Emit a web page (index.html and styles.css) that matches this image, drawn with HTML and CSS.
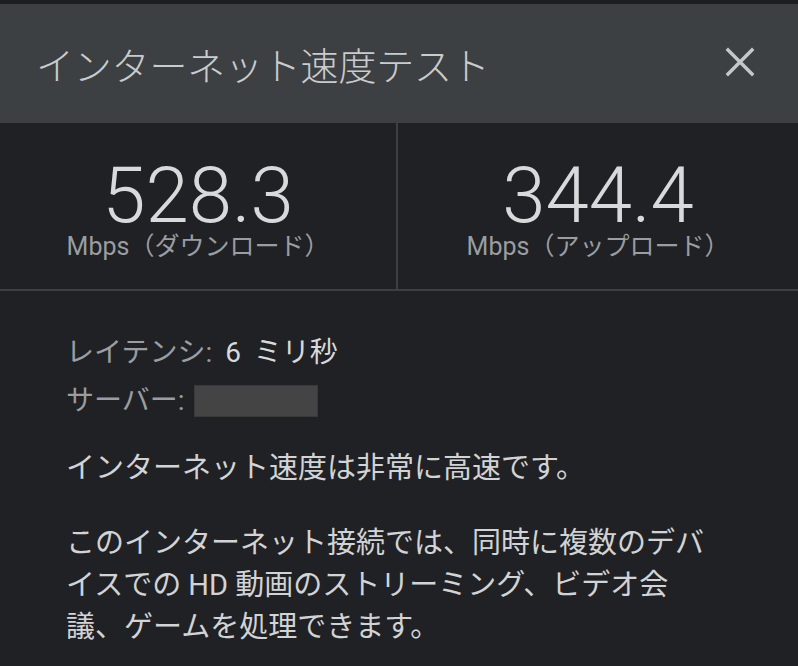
FILE: index.html
```html
<!DOCTYPE html>
<html lang="ja">
<head>
    <meta charset="UTF-8">
    <meta name="viewport" content="width=device-width, initial-scale=1.0">
    <title>インターネット速度テスト</title>
    <link rel="stylesheet" href="styles.css">
</head>
<body>
    <div id="speedTest">
        <div class="header">
            <h1 class="title">インターネット速度テスト</h1>
            <button class="close" aria-label="閉じる">
                <svg width="30" height="30" viewBox="0 0 30 30">
                    <path d="M3 3 L27 27 M27 3 L3 27" stroke="#c5c8cb" stroke-width="3.4" stroke-linecap="square" fill="none"/>
                </svg>
            </button>
        </div>

        <div class="stats">
            <div class="stat">
                <div class="value">528.3</div>
                <div class="unit">Mbps（ダウンロード）</div>
            </div>
            <div class="stat">
                <div class="value">344.4</div>
                <div class="unit">Mbps（アップロード）</div>
            </div>
        </div>

        <div class="details">
            <div class="info">
                <div class="row"><span class="label">レイテンシ: </span><span class="data">6 ミリ秒</span></div>
                <div class="row"><span class="label">サーバー:</span><span class="hidden-box"></span></div>
            </div>
            <p class="summary">インターネット速度は非常に高速です。</p>
            <p class="desc">このインターネット接続では、同時に複数のデバイスでの HD 動画のストリーミング、ビデオ会議、ゲームを処理できます。</p>
        </div>
    </div>
</body>
</html>
```

FILE: styles.css
```css
body {
    font-family: Roboto, "Noto Sans CJK JP", sans-serif;
    background-color: #202124;
    margin: 0;
    padding: 0;
}
#speedTest {
    width: 798px;
    height: 666px;
    overflow: hidden;
}
.header {
    height: 119px;
    border-top: 4px solid #1d1e21;
    background-color: #3c4043;
    display: flex;
    align-items: center;
    justify-content: space-between;
    padding: 0 43px 0 36px;
}
.title {
    margin: 0;
    font-family: "Noto Sans CJK JP", sans-serif;
    font-size: 38px;
    font-weight: 300;
    color: #c9cbcd;
    letter-spacing: -0.2px;
}
.close {
    background: none;
    border: none;
    padding: 0;
    width: 30px;
    height: 30px;
    margin-top: -4px;
    cursor: pointer;
}
.close svg {
    display: block;
}
.stats {
    display: grid;
    grid-template-columns: 398px 400px;
    height: 166px;
    border-bottom: 2px solid #3c4043;
}
.stat {
    display: flex;
    flex-direction: column;
    align-items: center;
    padding-top: 32px;
}
.stat:first-child {
    border-right: 2px solid #3c4043;
}
.value {
    font-family: Roboto, sans-serif;
    font-size: 78px;
    font-weight: 300;
    line-height: 82px;
    color: #d8d9da;
}
.unit {
    font-size: 25px;
    line-height: 20px;
    color: #9a9da1;
}
.details {
    padding: 38px 72px 0 66px;
}
.info {
    font-size: 28px;
    line-height: 48px;
}
.row {
    white-space: pre;
    word-spacing: 6px;
}
.label {
    color: #9a9da1;
}
.data {
    color: #d8d9da;
}
.hidden-box {
    display: inline-block;
    vertical-align: middle;
    width: 122px;
    height: 30px;
    margin: -4px 0 0 9px;
    background-color: #444444;
    border: 1px solid #393939;
}
.summary, .desc {
    font-size: 29px;
    line-height: 42px;
    color: #d2d3d5;
    margin: 0;
}
.summary {
    margin-top: 22px;
}
.desc {
    margin-top: 33px;
}
```
